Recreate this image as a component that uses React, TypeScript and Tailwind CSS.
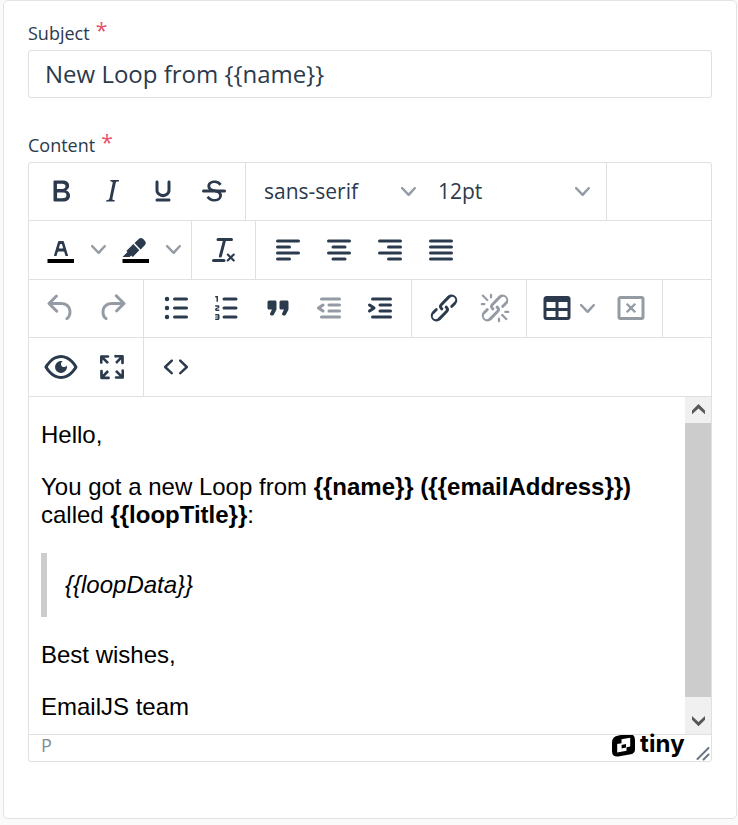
import React from "react";

const INK = "#2b3a4c";

const paths = {
  bold: "M7.8 19c-.3 0-.5 0-.6-.2l-.2-.5V5.7c0-.2 0-.4.2-.5l.6-.2h5c1.5 0 2.7.3 3.5 1 .7.6 1.1 1.4 1.1 2.5a3 3 0 0 1-.6 1.9c-.4.6-1 1-1.6 1.2.4.1.9.3 1.3.6s.8.7 1 1.2c.4.4.5 1 .5 1.6 0 1.3-.4 2.3-1.3 3-.8.7-2.1 1-3.8 1H7.8Zm5-8.3c.6 0 1.2-.1 1.6-.5.4-.3.6-.7.6-1.3 0-1.1-.8-1.7-2.3-1.7H9.3v3.5h3.4Zm.5 6c.7 0 1.3-.1 1.7-.4.4-.4.6-.9.6-1.5s-.2-1-.7-1.4c-.4-.3-1-.4-2-.4H9.4v3.8h4Z",
  italic: "m16.7 4.7-.1.9h-.3c-.6 0-1 0-1.4.3-.3.3-.4.6-.5 1.1l-2.1 9.8v.6c0 .5.4.8 1.4.8h.2l-.2.8H8l.2-.8h.2c1.1 0 1.8-.5 2-1.5l2-9.8.1-.5c0-.6-.4-.8-1.4-.8h-.3l.2-.9h5.8Z",
  underline: "M16 5c.6 0 1 .4 1 1v5.5a4 4 0 0 1-.4 1.8l-1 1.4a5.3 5.3 0 0 1-5.5 1 5 5 0 0 1-1.6-1c-.5-.4-.8-.9-1.1-1.4a4 4 0 0 1-.4-1.8V6c0-.6.4-1 1-1s1 .4 1 1v5.5c0 .3 0 .6.2 1l.6.7a3.3 3.3 0 0 0 2.2.8 3.4 3.4 0 0 0 2.2-.8c.3-.2.4-.5.6-.8l.2-.9V6c0-.6.4-1 1-1ZM8 17h8c.6 0 1 .4 1 1s-.4 1-1 1H8a1 1 0 0 1 0-2Z",
  strike: "M15.6 8.5c-.5-.7-1-1.1-1.3-1.3-.6-.4-1.3-.6-2-.6-2.7 0-2.8 1.7-2.8 2.1 0 1.6 1.8 2 3.2 2.3 4.4.9 4.6 2.8 4.6 3.9 0 1.4-.7 4.1-5 4.1A6.2 6.2 0 0 1 7 16.4l1.5-1.1c.4.6 1.6 2 3.7 2 1.6 0 2.5-.4 3-1.2.4-.8.3-2-.8-2.6-.7-.4-1.6-.7-2.9-1-1-.2-3.9-.8-3.9-3.6C7.6 6 10.3 5 12.4 5c2.9 0 4.2 1.6 4.7 2.4l-1.5 1.1Z",
  strikeBar: "M5 11h14a1 1 0 0 1 0 2H5a1 1 0 0 1 0-2Z",
  textColor: "M8.7 16h-.8a.5.5 0 0 1-.5-.6l2.7-9c.1-.3.3-.4.5-.4h2.8c.2 0 .4.1.5.4l2.7 9a.5.5 0 0 1-.5.6h-.8a.5.5 0 0 1-.4-.4l-.7-2.2c0-.3-.3-.4-.5-.4h-3.4c-.2 0-.4.1-.5.4l-.7 2.2c0 .3-.2.4-.4.4Zm2.6-7.6-.6 2a.5.5 0 0 0 .5.6h1.6a.5.5 0 0 0 .5-.6l-.6-2c0-.3-.3-.4-.5-.4h-.4c-.2 0-.4.1-.5.4Z",
  highlight: "M7.7 16.7H3l3.3-3.3-.7-.8L10.2 8l4 4.1-4 4.2c-.2.2-.6.2-.8 0l-.6-.7-1.1 1.1Zm5-7.5L11 7.4l3-2.9a2 2 0 0 1 2.6 0L18 6c.7.7.7 2 0 2.7l-2.9 2.9-1.8-1.8-.5-.6Z",
  clear: "M13.2 6a1 1 0 0 1 0 .2l-2.6 10a1 1 0 0 1-1 .8h-.2a.8.8 0 0 1-.8-1l2.6-10H8a1 1 0 1 1 0-2h9a1 1 0 0 1 0 2h-3.8ZM5 18h7a1 1 0 0 1 0 2H5a1 1 0 0 1 0-2Zm13 1.5L16.5 18 15 19.5a.7.7 0 0 1-1-1l1.5-1.5-1.5-1.5a.7.7 0 0 1 1-1l1.5 1.5 1.5-1.5a.7.7 0 0 1 1 1L17.5 17l1.5 1.5a.7.7 0 0 1-1 1Z",
  alignLeft: "M5 5h14a1 1 0 0 1 0 2H5a1 1 0 0 1 0-2Zm0 4h8a1 1 0 0 1 0 2H5a1 1 0 0 1 0-2Zm0 8h8a1 1 0 0 1 0 2H5a1 1 0 0 1 0-2Zm0-4h14a1 1 0 0 1 0 2H5a1 1 0 0 1 0-2Z",
  alignCenter: "M5 5h14a1 1 0 0 1 0 2H5a1 1 0 0 1 0-2Zm3 4h8a1 1 0 0 1 0 2H8a1 1 0 0 1 0-2Zm0 8h8a1 1 0 0 1 0 2H8a1 1 0 0 1 0-2Zm-3-4h14a1 1 0 0 1 0 2H5a1 1 0 0 1 0-2Z",
  alignRight: "M5 5h14a1 1 0 0 1 0 2H5a1 1 0 0 1 0-2Zm6 4h8a1 1 0 0 1 0 2h-8a1 1 0 0 1 0-2Zm0 8h8a1 1 0 0 1 0 2h-8a1 1 0 0 1 0-2Zm-6-4h14a1 1 0 0 1 0 2H5a1 1 0 0 1 0-2Z",
  alignJustify: "M5 5h14a1 1 0 0 1 0 2H5a1 1 0 0 1 0-2Zm0 4h14a1 1 0 0 1 0 2H5a1 1 0 0 1 0-2Zm0 4h14a1 1 0 0 1 0 2H5a1 1 0 0 1 0-2Zm0 4h14a1 1 0 0 1 0 2H5a1 1 0 0 1 0-2Z",
  undo: "M6.4 8H12c3.7 0 6.2 2 6.8 5.1.6 2.7-.4 5.6-2.3 6.8a1 1 0 0 1-1-1.8c1.1-.6 1.8-2.7 1.4-4.6-.5-2.1-2.1-3.5-4.9-3.5H6.4l3.3 3.3a1 1 0 1 1-1.4 1.4l-5-5a1 1 0 0 1 0-1.4l5-5a1 1 0 0 1 1.4 1.4L6.4 8Z",
  redo: "M17.6 10H12c-2.8 0-4.4 1.4-4.9 3.5-.4 2 .3 4 1.4 4.6a1 1 0 1 1-1 1.8c-2-1.2-2.9-4.1-2.3-6.8.6-3 3-5.1 6.8-5.1h5.6l-3.3-3.3a1 1 0 1 1 1.4-1.4l5 5a1 1 0 0 1 0 1.4l-5 5a1 1 0 0 1-1.4-1.4l3.3-3.3Z",
  bullets: "M11 5h8a1 1 0 0 1 0 2h-8a1 1 0 0 1 0-2Zm0 6h8a1 1 0 0 1 0 2h-8a1 1 0 0 1 0-2Zm0 6h8a1 1 0 0 1 0 2h-8a1 1 0 0 1 0-2ZM4.500 6a1.500 1.500 0 1 1 3 0 1.500 1.500 0 0 1-3 0Zm0 6a1.500 1.500 0 1 1 3 0 1.500 1.500 0 0 1-3 0Zm0 6a1.500 1.500 0 1 1 3 0 1.500 1.500 0 0 1-3 0Z",
  numbers: "M10 17h8a1 1 0 0 1 0 2h-8a1 1 0 0 1 0-2Zm0-6h8a1 1 0 0 1 0 2h-8a1 1 0 0 1 0-2Zm0-6h8a1 1 0 0 1 0 2h-8a1 1 0 0 1 0-2ZM6 4v3.500c0 .3-.2.5-.5.5a.5.5 0 0 1-.5-.5V5h-.5a.5.5 0 0 1 0-1H6Zm-1 8.800.2.2h1.300c.3 0 .5.2.5.5s-.2.5-.5.5H4.900a1 1 0 0 1-.9-1V13c0-.4.3-.8.6-1l1.200-.4.2-.3a.2.2 0 0 0-.2-.2H4.500a.5.5 0 0 1-.5-.5c0-.3.2-.5.5-.5h1.600c.5 0 .9.4.9 1v.1c0 .4-.3.8-.6 1l-1.200.4-.2.3ZM7 17v2c0 .6-.4 1-1 1H4.500a.5.5 0 0 1 0-1h1.200c.2 0 .3-.1.3-.3 0-.2-.1-.3-.3-.3H4.400a.4.4 0 1 1 0-.8h1.300c.2 0 .3-.1.3-.3 0-.2-.1-.3-.3-.3H4.500a.5.5 0 1 1 0-1H6c.6 0 1 .4 1 1Z",
  quote: "M7.5 17h.9c.4 0 .7-.2.9-.6L11 13V8c0-.6-.4-1-1-1H6a1 1 0 0 0-1 1v4c0 .6.4 1 1 1h2l-1.300 2.700a1 1 0 0 0 .8 1.300Zm8 0h.9c.4 0 .7-.2.9-.6L19 13V8c0-.6-.4-1-1-1h-4a1 1 0 0 0-1 1v4c0 .6.4 1 1 1h2l-1.300 2.700a1 1 0 0 0 .8 1.300Z",
  indentBars: "M7 5h12a1 1 0 0 1 0 2H7a1 1 0 1 1 0-2Zm5 4h7a1 1 0 0 1 0 2h-7a1 1 0 0 1 0-2Zm0 4h7a1 1 0 0 1 0 2h-7a1 1 0 0 1 0-2Zm-5 4h12a1 1 0 0 1 0 2H7a1 1 0 0 1 0-2Z",
  outArrow: "M8.600 13.200a1 1 0 0 1-1.200 1.600l-3-2a1 1 0 0 1 0-1.600l3-2a1 1 0 0 1 1.200 1.600L6.800 12l1.800 1.200Z",
  inArrow: "M4.400 13.200 6.200 12l-1.800-1.200a1 1 0 0 1 1.200-1.600l3 2a1 1 0 0 1 0 1.600l-3 2a1 1 0 1 1-1.200-1.600Z",
  link: "M6.200 12.300a1 1 0 0 1 1.400 1.400l-2 2a2 2 0 1 0 2.600 2.800l4.800-4.800a1 1 0 0 0 0-1.400 1 1 0 1 1 1.400-1.300 2.900 2.900 0 0 1 0 4L9.600 20a3.900 3.900 0 0 1-5.500-5.500l2-2Zm11.600-.6a1 1 0 0 1-1.400-1.400l2-2a2 2 0 1 0-2.600-2.800L11 10.300a1 1 0 0 0 0 1.400A1 1 0 1 1 9.600 13a2.900 2.900 0 0 1 0-4L14.400 4a3.900 3.900 0 0 1 5.500 5.500l-2 2Z",
  rays: "M7.600 6.300a.8.8 0 0 1-1 1.100L3.300 4.200a.7.7 0 1 1 1-1l3.200 3.100ZM5.100 8.600a.8.8 0 0 1 0 1.500H3a.8.8 0 0 1 0-1.500H5Zm5-3.500a.8.8 0 0 1-1.500 0V3a.8.8 0 0 1 1.500 0V5Zm6 11.800a.8.8 0 0 1 1-1l3.200 3.200a.8.8 0 0 1-1 1L16 17Zm-2.200 2a.8.8 0 0 1 1.500 0V21a.8.8 0 0 1-1.500 0V19Zm5-3.500a.7.7 0 1 1 0-1.500H21a.8.8 0 0 1 0 1.500H19Z",
  table: "M19 4a2 2 0 0 1 2 2v12a2 2 0 0 1-2 2H5a2 2 0 0 1-2-2V6c0-1.100.9-2 2-2h14ZM5 14v4h6v-4H5Zm14 0h-6v4h6v-4Zm0-6h-6v4h6V8ZM5 12h6V8H5v4Z",
  tableFrame: "M19 4a2 2 0 0 1 2 2v12a2 2 0 0 1-2 2H5a2 2 0 0 1-2-2V6c0-1.100.9-2 2-2h14ZM5 6v12h14V6H5Z",
  tableX: "m14.400 8.600 1 1-2.300 2.400 2.300 2.400-1 1-2.400-2.300-2.400 2.300-1-1 2.300-2.400-2.300-2.400 1-1 2.400 2.300 2.400-2.300Z",
  preview: "M3.500 12.500c.5.8 1.100 1.600 1.800 2.300 2 2 4.200 3.200 6.700 3.200s4.700-1.200 6.700-3.200a16.200 16.200 0 0 0 2.100-2.800 15.700 15.700 0 0 0-2.100-2.800c-2-2-4.200-3.200-6.700-3.200a9.300 9.300 0 0 0-6.700 3.200A16.200 16.200 0 0 0 3.200 12c0 .2.2.3.3.5Zm-2.400-1 .7-1.200L4 7.800C6.200 5.400 8.900 4 12 4c3 0 5.800 1.400 8.100 3.800a18.200 18.200 0 0 1 2.800 3.700v1l-.7 1.200-2.100 2.500c-2.300 2.400-5 3.800-8.100 3.800-3 0-5.800-1.400-8.100-3.800a18.200 18.200 0 0 1-2.800-3.700 1 1 0 0 1 0-1Zm12-3.300a2 2 0 1 0 2.700 2.600 4 4 0 1 1-2.600-2.600Z",
  fullscreen: "m15.300 10-1.200-1.300 2.900-3h-2.300a.9.9 0 1 1 0-1.700H19c.5 0 .9.4.9.9v4.400a.9.9 0 1 1-1.800 0V7l-2.900 3Zm0 4 3 3v-2.300a.9.9 0 1 1 1.700 0V19c0 .5-.4.9-.9.9h-4.400a.9.9 0 1 1 0-1.800H17l-3-2.900 1.300-1.200ZM10 15.400l-2.900 3h2.300a.9.9 0 1 1 0 1.700H5a.9.9 0 0 1-.9-.9v-4.400a.9.9 0 1 1 1.800 0V17l2.900-3 1.200 1.300ZM8.700 10 5.700 7v2.300a.9.9 0 0 1-1.700 0V5c0-.5.4-.9.9-.9h4.400a.9.9 0 0 1 0 1.800H7l3 2.900-1.300 1.200Z",
  code: "M9.800 15.700c.3.3.3.8 0 1-.3.4-.9.4-1.200 0l-4.400-4.100a.8.8 0 0 1 0-1.200l4.400-4.200c.3-.3.9-.3 1.200 0 .3.3.3.8 0 1.100L6 12l3.800 3.700ZM14.200 15.700c-.3.3-.3.8 0 1 .4.4.9.4 1.200 0l4.400-4.100c.3-.3.3-.8 0-1.200l-4.400-4.200a.8.8 0 0 0-1.200 0c-.3.3-.3.8 0 1.100L18 12l-3.800 3.700Z",
};

function Icon({ d, muted, bar }: { d: string[]; muted?: boolean; bar?: boolean }) {
  return (
    <svg width="36" height="36" viewBox="0 0 24 24" fill={INK} fillRule="evenodd" className={muted ? "block shrink-0 opacity-50" : "block shrink-0"}>
      {bar && <path d="M3 18H20.670v2.670H3z" fill="#000" />}
      {d.map((p) => (
        <path key={p} d={p} />
      ))}
    </svg>
  );
}

function Tool(props: { d: string[]; muted?: boolean; bar?: boolean }) {
  return (
    <button className="flex w-[51px] shrink-0 justify-center">
      <Icon {...props} />
    </button>
  );
}

function Chevron() {
  return (
    <svg width="15" height="15" viewBox="0 0 10 10" fill={INK} className="block shrink-0 opacity-50">
      <path d="M8.700 2.200c.3-.3.8-.3 1 0 .4.4.4.9 0 1.200L5.700 7.800c-.3.3-.9.3-1.200 0L.2 3.400a.8.8 0 0 1 0-1.200c.3-.3.8-.3 1.100 0L5 6l3.700-3.800Z" />
    </svg>
  );
}

function Split({ d }: { d: string[] }) {
  return (
    <div className="flex h-9 w-[75px] shrink-0 items-center pl-[7.5px]">
      <Icon d={d} bar />
      <span className="mb-0.5 ml-3">
        <Chevron />
      </span>
    </div>
  );
}

function Group({ children, last }: { children: React.ReactNode; last?: boolean }) {
  return <div className={last ? "flex items-start px-1.5" : "flex items-start border-r border-[#dfe0e2] px-1.5"}>{children}</div>;
}

function Select({ label, className }: { label: string; className: string }) {
  return (
    <button className={`flex h-9 items-center justify-between text-[21px] leading-9 text-[#2b3a4c] ${className}`}>
      <span>{label}</span>
      <Chevron />
    </button>
  );
}

const EVEN = "flex h-[58px] border-b border-[#dfe0e2] *:pt-2.5";
const ODD = "flex h-[59px] border-b border-[#dfe0e2] *:pt-[11px]";

function Label({ text }: { text: string }) {
  return (
    <div className="flex h-7 items-start text-[18px] leading-7 text-[#2b3a4c]">
      {text}
      <span className="-mt-[3px] ml-[6px] text-[21px] leading-7 text-[#e8506e]">*</span>
    </div>
  );
}

function TinyLogo() {
  return (
    <div className="flex h-[22px] items-start gap-[5px] text-black">
      <svg width="23" height="22" viewBox="0 0 23 22" className="block">
        <path d="M6.500.4 9 0H21Q23 1.500 23 5v9.300q0 4.200-4.200 5L7.500 21.300Q0 22.500 0 16.200V7.500Q0 1.400 6.500.4Z" />
        <path fill="#fff" fillRule="evenodd" d="M9.500 4.300 18.200 2.800v8.800l-3.700.7v3.500l-9.300 1.700V8.900l4.300-.7V4.300Zm-.1 5.600v3.500l4.700-.8V9l-4.700.9Z" />
        <path fill="#fff" d="m14.100 9 1.700-1.800v3.500l-1.700 1.800ZM9.400 9.900v3.500l-1.600 1.500v-3.400Z" />
      </svg>
      <span className="text-[24px] font-bold leading-[18px] tracking-[.2px]" style={{ fontFamily: "Inter, sans-serif" }}>tiny</span>
    </div>
  );
}

function ScrollBar() {
  return (
    <div className="flex w-[26px] shrink-0 flex-col bg-[#f0f0f0]">
      <div className="flex h-[26px] items-start justify-center pt-[7px]">
        <svg width="13" height="11" viewBox="0 0 13 11" className="block"><path d="M0 6.500 6.500 0 13 6.500V10.300L6.500 4.400 0 10.300Z" fill="#585858" /></svg>
      </div>
      <div className="h-[274px] bg-[#cccccc]" />
      <div className="flex flex-1 justify-center pt-[19px]">
        <svg width="13" height="11" viewBox="0 0 13 11" className="block"><path d="M0 3.800V0L6.500 5.900 13 0v3.800L6.500 10.300Z" fill="#585858" /></svg>
      </div>
    </div>
  );
}

export default function App() {
  return (
    <div className="h-[825px] w-[738px] overflow-hidden bg-[#fafafa] pl-[3px]" style={{ fontFamily: "'Open Sans', sans-serif" }}>
      <div className="h-[819px] w-[734px] rounded-[5px] border border-[#e2e3e4] bg-white px-6 pt-[18px]">
        <Label text="Subject" />
        <div className="mt-[3px] flex h-12 items-center rounded-[3px] border border-[#dfe0e2] px-4 text-[24px] text-[#2b3a4c]">New Loop from {"{{name}}"}</div>
        <div className="mt-[33px]">
          <Label text="Content" />
        </div>
        <div className="mt-[3px] flex h-[600px] flex-col overflow-hidden rounded-[3px] border border-[#dfe0e2]">
          <div className={EVEN}>
            <Group>
              <Tool d={[paths.bold]} />
              <Tool d={[paths.italic]} />
              <Tool d={[paths.underline]} />
              <Tool d={[paths.strike, paths.strikeBar]} />
            </Group>
            <Group>
              <Select label="sans-serif" className="ml-3 w-[152px]" />
              <Select label="12pt" className="ml-[22px] mr-[10px] w-[152px]" />
            </Group>
          </div>
          <div className={ODD}>
            <Group>
              <Split d={[paths.textColor]} />
              <Split d={[paths.highlight]} />
            </Group>
            <Group>
              <Tool d={[paths.clear]} />
            </Group>
            <Group last>
              <Tool d={[paths.alignLeft]} />
              <Tool d={[paths.alignCenter]} />
              <Tool d={[paths.alignRight]} />
              <Tool d={[paths.alignJustify]} />
            </Group>
          </div>
          <div className={EVEN}>
            <Group>
              <Tool d={[paths.undo]} muted />
              <Tool d={[paths.redo]} muted />
            </Group>
            <Group>
              <Tool d={[paths.bullets]} />
              <Tool d={[paths.numbers]} />
              <Tool d={[paths.quote]} />
              <Tool d={[paths.indentBars, paths.outArrow]} muted />
              <Tool d={[paths.indentBars, paths.inArrow]} />
            </Group>
            <Group>
              <Tool d={[paths.link]} />
              <Tool d={[paths.link, paths.rays]} muted />
            </Group>
            <Group>
              <button className="flex h-9 w-[72px] items-center gap-[5px] pl-1.5">
                <Icon d={[paths.table]} />
                <Chevron />
              </button>
              <Tool d={[paths.tableFrame, paths.tableX]} muted />
            </Group>
          </div>
          <div className={ODD}>
            <Group>
              <Tool d={[paths.preview]} />
              <Tool d={[paths.fullscreen]} />
            </Group>
            <Group last>
              <Tool d={[paths.code]} />
            </Group>
          </div>
          <div className="flex h-[337px] shrink-0">
            <div className="flex flex-1 flex-col gap-6 pl-3 pt-6 text-[24px] leading-7 text-black" style={{ fontFamily: "'Liberation Sans', Arial, sans-serif" }}>
              <p>Hello,</p>
              <p>
                You got a new Loop from <b>{"{{name}} ({{emailAddress}})"}</b>
                <br />
                called <b>{"{{loopTitle}}"}</b>:
              </p>
              <blockquote className="border-l-[6px] border-[#cccccc] py-[18px] pl-[18px] italic">{"{{loopData}}"}</blockquote>
              <p>Best wishes,</p>
              <p>EmailJS team</p>
            </div>
            <ScrollBar />
          </div>
          <div className="flex flex-1 items-start border-t border-[#dfe0e2] pl-3">
            <span className="flex-1 text-[18px] leading-[21px] text-[#808994]">P</span>
            <TinyLogo />
            <svg width="14" height="14" viewBox="0 0 14 14" className="ml-[11px] mr-px mt-3 block" stroke="#6b7583" strokeWidth="2" strokeLinecap="round">
              <path d="M1.500 12 12.500 1M7.500 12.500 12.500 7.500" />
            </svg>
          </div>
        </div>
      </div>
    </div>
  );
}
